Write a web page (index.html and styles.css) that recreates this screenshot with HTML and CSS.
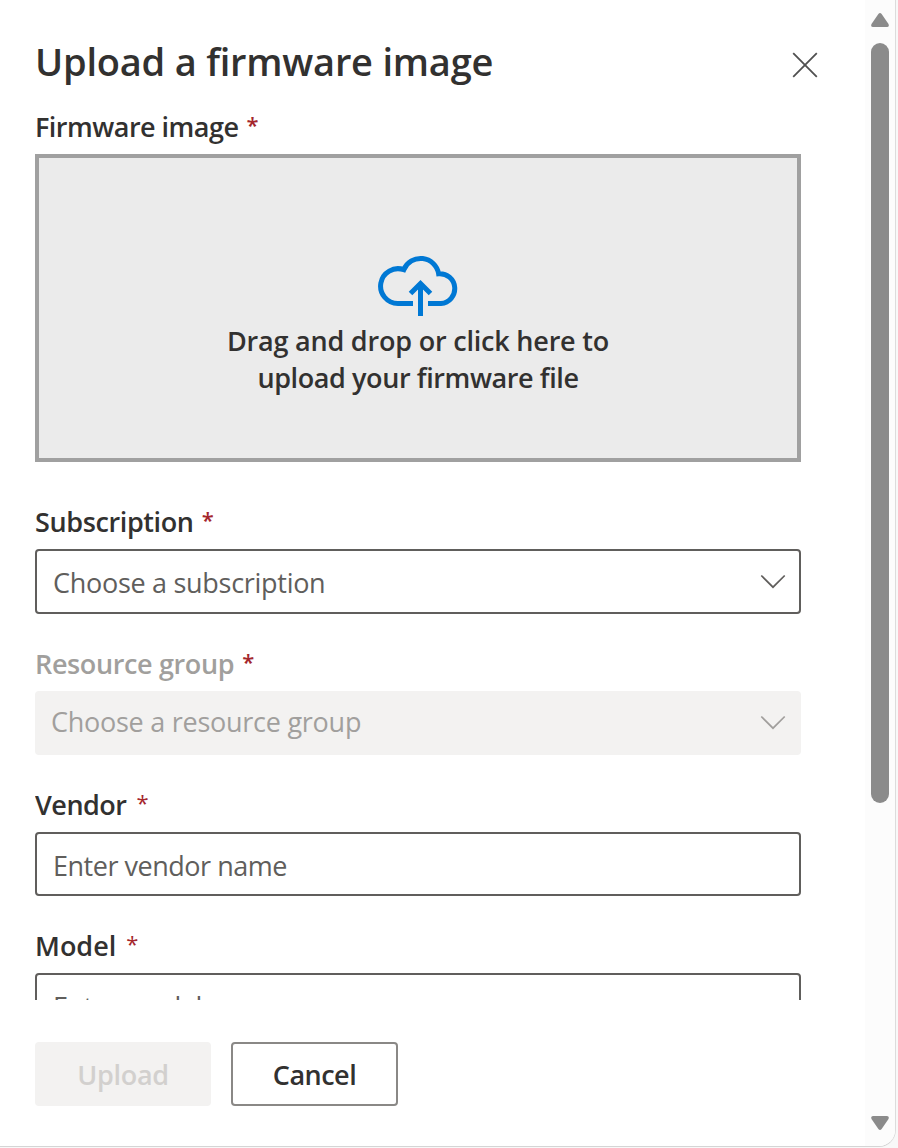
FILE: index.html
```html
<!DOCTYPE html>
<html lang="en">
<head>
<meta charset="utf-8">
<title>Upload a firmware image</title>
<link rel="stylesheet" href="styles.css">
</head>
<body>
<div class="panel">
  <main class="content">
    <header class="header">
      <h1 class="title">Upload a firmware image</h1>
      <button class="close" aria-label="Close">
        <svg width="26" height="26" viewBox="0 0 26 26" fill="none" stroke="#505050" stroke-width="1.8"><path d="M1.2 1.2 24.8 24.8M24.8 1.2 1.2 24.8"/></svg>
      </button>
    </header>
    <div class="form">
      <div class="label"><span class="t-firmware">Firmware image</span><span class="star">*</span></div>
      <div class="dropzone">
        <svg class="cloud" width="82" height="62" viewBox="0 0 82 62" fill="none" stroke="#0078d4" stroke-width="5"><path d="M36 49.500H20.900A17.400 17.400 0 1 1 26.800 15.700A18.200 18.200 0 0 1 61.600 19.700A14.900 14.900 0 1 1 64 49.500H51"/><path d="M43.500 62V30M33.500 39.500 43.500 29.500 53.500 39.500"/></svg>
        <p class="drop-text"><span class="t-drag">Drag and drop or click here to</span><br><span class="t-drop2">upload your firmware file</span></p>
      </div>
      <div class="label label-subscription"><span class="t-subscription">Subscription</span><span class="star">*</span></div>
      <div class="field select"><span class="t-choose-sub">Choose a subscription</span>
        <svg class="chevron" width="26" height="16" viewBox="0 0 26 16" fill="none" stroke="currentColor" stroke-width="1.700"><path d="M1.300 1.500 13 13.200 24.700 1.500"/></svg>
      </div>
      <div class="label label-group"><span class="t-group">Resource group</span><span class="star">*</span></div>
      <div class="field select disabled"><span class="t-choose-group">Choose a resource group</span>
        <svg width="26" height="16" viewBox="0 0 26 16" fill="none" stroke="currentColor" stroke-width="1.700"><path d="M1.300 1.500 13 13.200 24.700 1.500"/></svg>
      </div>
      <div class="label label-vendor"><span class="t-vendor">Vendor</span><span class="star light">*</span></div>
      <div class="field input"><span class="t-enter">Enter vendor name</span></div>
      <div class="label label-model"><span class="t-model">Model</span><span class="star light">*</span></div>
      <div class="field input"><span class="t-enter">Enter model</span></div>
    </div>
    <footer class="footer">
      <button class="button primary" disabled><span class="t-upload">Upload</span></button>
      <button class="button"><span class="t-cancel">Cancel</span></button>
    </footer>
  </main>
  <div class="scrollbar">
    <svg width="18" height="14" viewBox="0 0 18 14" fill="#8b8b8b"><path d="M7.400 1Q9-1 10.600 1L17.500 11Q18.500 13.800 16 14H2Q-.5 13.800.5 11Z"/></svg>
    <div class="thumb"></div>
    <svg class="down" width="18" height="14" viewBox="0 0 18 14" fill="#8b8b8b"><path d="M7.400 13Q9 15 10.600 13L17.500 3Q18.500.2 16 0H2Q-.5.2.5 3Z"/></svg>
  </div>
</div>
</body>
</html>
```
FILE: styles.css
```css
* { box-sizing: border-box; }
body {
  margin: 0;
  height: 1148px;
  overflow: hidden;
  background: #f8f8f8;
  font-family: "Open Sans", "Noto Sans", sans-serif;
  color: #323130;
}
.panel {
  display: grid;
  grid-template-columns: 865px 30px;
  width: 896px;
  height: 1147px;
  background: #fff;
  border-right: 1px solid #dcdcdc;
  border-bottom: 1px solid #d5d5d5;
  border-bottom-right-radius: 17px;
  overflow: hidden;
}
.content { padding: 0 64px 0 35px; }
.header {
  display: flex;
  justify-content: space-between;
  height: 109px;
  margin-right: -17px;
}
.title {
  margin: 34px 0 0;
  font-size: 38px;
  line-height: 54px;
  font-weight: 600;
  letter-spacing: -0.22px;
  white-space: nowrap;
}
.close {
  align-self: flex-start;
  width: 26px;
  height: 26px;
  margin-top: 52px;
  padding: 0;
  border: 0;
  background: none;
}
.close svg { display: block; }
.form { height: 891px; overflow: hidden; }
.label {
  display: flex;
  height: 45px;
  font-size: 27px;
  line-height: 36px;
  font-weight: 600;
  white-space: nowrap;
}
.star { margin-left: 8px; color: #a4262c; font-size: 22px; line-height: 31px; }
.star.light { font-weight: 400; margin-left: 10px; }
.dropzone {
  height: 308px;
  padding-top: 96px;
  border: 4px solid #a0a0a0;
  background: #ebebeb;
  text-align: center;
}
.cloud { display: block; margin: 0 auto; }
.drop-text {
  margin: 6px 0 0;
  font-size: 27px;
  line-height: 37px;
  font-weight: 600;
  white-space: nowrap;
}
.label-subscription { margin-top: 42px; }
.label-group, .label-vendor, .label-model { margin-top: 32px; }
.label-group { color: #a19f9d; }
.t-firmware { letter-spacing: -0.52px; }
.t-drag { letter-spacing: -0.2px; }
.t-drop2 { letter-spacing: -0.4px; }
.t-subscription { letter-spacing: -0.38px; }
.t-choose-sub { letter-spacing: -0.29px; }
.t-group { letter-spacing: -0.36px; }
.t-choose-group { letter-spacing: -0.26px; margin-top: -3px; }
.t-vendor { letter-spacing: -0.5px; }
.t-enter { letter-spacing: -0.48px; }
.t-upload { letter-spacing: -0.3px; }
.t-cancel { letter-spacing: -0.5px; }
.field {
  display: flex;
  align-items: center;
  height: 64px;
  padding: 2px 14px 0 16px;
  border: 2px solid #605e5c;
  border-radius: 4px;
  color: #605e5c;
  font-size: 27px;
  white-space: nowrap;
}
.select { height: 65px; padding-right: 13px; justify-content: space-between; }
.chevron { margin-top: -2px; }
.disabled {
  height: 64px;
  padding: 0 15px 0 16px;
  border: 0;
  background: #f3f2f1;
  color: #a19f9d;
}
.footer { display: flex; gap: 20px; padding-top: 42px; }
.button {
  width: 167px;
  height: 64px;
  padding: 0;
  border: 2px solid #8a8886;
  border-radius: 4px;
  background: #fff;
  color: #323130;
  font: 600 27px "Open Sans", sans-serif;
}
.primary {
  width: 176px;
  border: 0;
  background: #f3f2f1;
  color: #d2d0ce;
}
.scrollbar {
  display: flex;
  flex-direction: column;
  align-items: center;
  padding: 13px 0 16px;
  background: #fcfcfc;
}
.thumb {
  width: 18px;
  height: 760px;
  margin-top: 16px;
  border-radius: 9px;
  background: #8b8b8b;
}
.down { margin-top: auto; }
```
